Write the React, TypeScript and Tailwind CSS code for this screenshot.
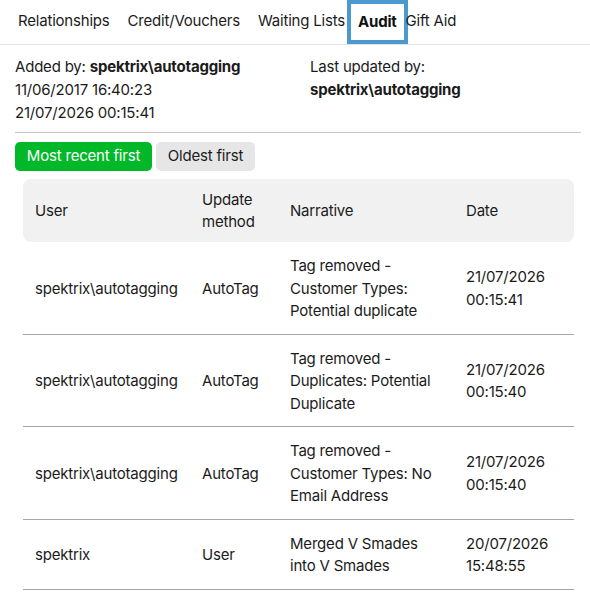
import React, { useState } from 'react';

type AuditRow = {
  user: string;
  method: string;
  narrative: string;
  date: string;
  time: string;
};

const rows: AuditRow[] = [
  { user: 'spektrix\\autotagging', method: 'AutoTag', narrative: 'Tag removed - Customer Types: Potential duplicate', date: '21/07/2026', time: '00:15:41' },
  { user: 'spektrix\\autotagging', method: 'AutoTag', narrative: 'Tag removed - Duplicates: Potential Duplicate', date: '21/07/2026', time: '00:15:40' },
  { user: 'spektrix\\autotagging', method: 'AutoTag', narrative: 'Tag removed - Customer Types: No Email Address', date: '21/07/2026', time: '00:15:40' },
  { user: 'spektrix', method: 'User', narrative: 'Merged V Smades into V Smades', date: '20/07/2026', time: '15:48:55' },
];

const tabs = ['Relationships', 'Credit/Vouchers', 'Waiting Lists', 'Audit', 'Gift Aid'];

export default function App() {
  const [sort, setSort] = useState<'recent' | 'oldest'>('recent');
  const list = sort === 'recent' ? rows : [...rows].reverse();

  return (
    <div className="min-h-screen bg-white text-[15px] text-[#1b1b1b] font-['Inter','Liberation_Sans',sans-serif] tracking-[-0.2px]">
      {/* Tabs */}
      <div className="flex items-stretch h-[45px] pl-[9px] border-b border-[#e2e2e2]">
        {tabs.map((t) =>
          t === 'Audit' ? (
            <div
              key={t}
              className="flex items-center -ml-[7px] -mr-[11px] px-[7px] pb-[1px] pt-[1px] border-4 border-[#4a9ad0] font-bold text-[#111]"
            >
              {t}
            </div>
          ) : (
            <div key={t} className="flex items-center px-[9px] pb-[2px]">
              {t}
            </div>
          )
        )}
      </div>

      <div className="pl-[15px] pr-[9px]">
        {/* Info */}
        <div className="flex pt-[10px] pb-[8px] leading-[23px] border-b border-[#c8c8c8]">
          <div className="w-[295px]">
            <div>
              Added by: <span className="font-bold">spektrix\autotagging</span>
            </div>
            <div>11/06/2017 16:40:23</div>
            <div>21/07/2026 00:15:41</div>
          </div>
          <div>
            <div>Last updated by:</div>
            <div className="font-bold">spektrix\autotagging</div>
          </div>
        </div>

        {/* Sort buttons */}
        <div className="flex gap-[4px] mt-[9px]">
          <button
            onClick={() => setSort('recent')}
            className={`h-[29px] w-[137px] rounded-[5px] ${sort === 'recent' ? 'bg-[#00b828] text-white' : 'bg-[#e6e6e6] text-[#1b1b1b]'}`}
          >
            Most recent first
          </button>
          <button
            onClick={() => setSort('oldest')}
            className={`h-[29px] w-[99px] rounded-[5px] ${sort === 'oldest' ? 'bg-[#00b828] text-white' : 'bg-[#e6e6e6] text-[#1b1b1b]'}`}
          >
            Oldest first
          </button>
        </div>

        {/* Table */}
        <div className="ml-[8px] w-[551px] mt-[8px]">
          <div className="grid grid-cols-[167px_88px_176px_120px] items-center h-[63px] bg-[#f1f1f1] rounded-[8px] leading-[22px]">
            <div className="px-[12px]">User</div>
            <div className="px-[12px]">Update method</div>
            <div className="px-[12px]">Narrative</div>
            <div className="px-[12px]">Date</div>
          </div>
          {list.map((r, i) => (
            <div
              key={i}
              className="grid grid-cols-[167px_88px_176px_120px] items-center pt-[13px] pb-[11px] leading-[22.5px] border-b border-[#a6a6a6]"
            >
              <div className="px-[12px]">{r.user}</div>
              <div className="px-[12px]">{r.method}</div>
              <div className="px-[12px]">{r.narrative}</div>
              <div className="px-[12px]">
                <div>{r.date}</div>
                <div>{r.time}</div>
              </div>
            </div>
          ))}
        </div>
      </div>
    </div>
  );
}
